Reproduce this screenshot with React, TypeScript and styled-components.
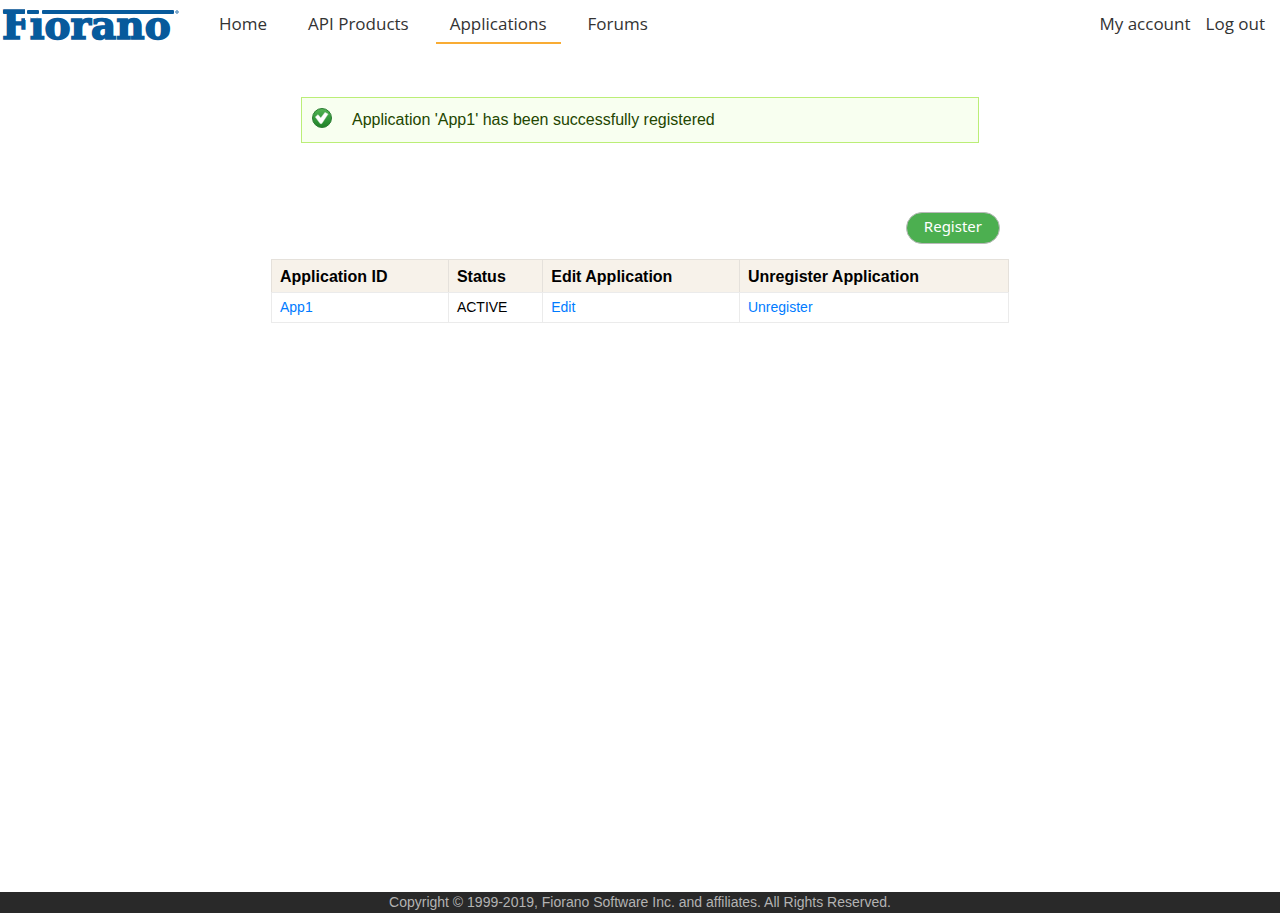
import React from "react";
import styled, { createGlobalStyle } from "styled-components";

const GlobalStyle = createGlobalStyle`
  * { box-sizing: border-box; }
  body {
    margin: 0;
    background: #fff;
    color: #000;
    font-family: "Liberation Sans", Arial, sans-serif;
  }
`;

const Page = styled.div`
  display: flex;
  flex-direction: column;
  min-height: 100vh;
`;

const Header = styled.header`
  display: flex;
  align-items: flex-start;
  padding-right: 15px;
  font-family: "Open Sans", sans-serif;
  font-size: 17px;
  line-height: 24px;
`;

const LogoLink = styled.a`
  display: block;
  flex: none;
  width: 205px;
  height: 48px;
`;

const Nav = styled.nav`
  display: flex;
  gap: 13px;
`;

const NavLink = styled.a<{ $active?: boolean }>`
  padding: 12px 14px 6px;
  border-bottom: 2px solid ${(p) => (p.$active ? "#f9ac34" : "transparent")};
  color: #333;
  text-decoration: none;
  white-space: nowrap;
`;

const Account = styled.div`
  display: flex;
  gap: 15px;
  margin-left: auto;
  padding-top: 12px;
`;

const AccountLink = styled.a`
  color: #333;
  text-decoration: none;
  white-space: nowrap;
`;

const Main = styled.main`
  display: flex;
  flex-direction: column;
  flex: 1;
  width: 100%;
  max-width: 738px;
  margin: 0 auto;
  padding-top: 49px;
`;

const Message = styled.div`
  display: flex;
  gap: 20px;
  margin: 0 30px;
  padding: 10px;
  border: 1px solid #be7;
  background: #f8fff0;
  color: #234600;
  font-size: 16px;
  line-height: 24px;
`;

const StatusIcon = styled.svg`
  flex: none;
  width: 20px;
  height: 20px;
`;

const RegisterButton = styled.button`
  align-self: flex-end;
  margin: 69px 9px 15px 0;
  padding: 0 17px 4px;
  height: 32px;
  border: 1px solid #b9b9b9;
  border-radius: 16px;
  background: #4caf50;
  color: #fff;
  font-family: "Noto Sans", sans-serif;
  font-size: 15px;
  line-height: 24px;
`;

const Table = styled.table`
  width: 100%;
  table-layout: fixed;
  border-collapse: collapse;
  text-align: left;
`;

const Column = styled.col<{ $share: number }>`
  width: ${(p) => p.$share}%;
`;

const HeadCell = styled.th`
  padding: 5px 8px 3px;
  border: 1px solid #e5e1db;
  border-bottom-color: #ebebeb;
  background: #f7f2ea;
  font-size: 16px;
  line-height: 24px;
`;

const Cell = styled.td`
  padding: 4px 8px;
  border: 1px solid #ebebeb;
  font-size: 14px;
  line-height: 21px;
`;

const CellLink = styled.a`
  color: #007bff;
  text-decoration: none;
`;

const Footer = styled.footer`
  background: #292929;
  color: #b3b3b3;
  text-align: center;
  font-size: 14px;
  line-height: 21px;
`;

function Logo() {
  return (
    <svg width="182" height="48" viewBox="0 0 182 48" role="img" aria-label="Fiorano">
      <g fill="#075a9c">
        <text
          x="2"
          y="39"
          fontFamily="DejaVu Serif, serif"
          fontWeight="bold"
          fontSize="39"
          stroke="#075a9c"
          strokeWidth="1.6"
        >
          Fiorano
        </text>
        <path d="M25 8H42V17H30V20H25z" fill="#fff" />
        <rect x="3" y="10" width="22" height="4" rx="1" />
        <rect x="27" y="10" width="12" height="4" rx="1" />
        <rect x="42" y="10" width="132" height="4" rx="1" />
      </g>
      <circle cx="177" cy="12" r="1.3" fill="#a9c6df" stroke="#5b92bf" />
    </svg>
  );
}

function CheckIcon() {
  return (
    <StatusIcon viewBox="0 0 20 20" aria-hidden="true">
      <defs>
        <linearGradient id="disc" x1="0" y1="0" x2="0" y2="1">
          <stop offset="0" stopColor="#55b555" />
          <stop offset="0.5" stopColor="#359a3d" />
          <stop offset="1" stopColor="#208128" />
        </linearGradient>
      </defs>
      <circle cx="10" cy="10" r="9.5" fill="url(#disc)" stroke="#2c7b33" />
      <path d="M3.2 9 6 6.6l2.8 3.2L13 4.2l3.2 1.9-6.4 9.6H8.2z" fill="#fff" stroke="#b9d9b8" strokeWidth="0.4" />
    </StatusIcon>
  );
}

const navItems = ["Home", "API Products", "Applications", "Forums"];
const columns = [
  { title: "Application ID", share: 24 },
  { title: "Status", share: 12.8 },
  { title: "Edit Application", share: 26.7 },
  { title: "Unregister Application", share: 36.5 },
];

export default function App() {
  return (
    <Page>
      <GlobalStyle />
      <Header>
        <LogoLink href="#"><Logo /></LogoLink>
        <Nav>
          {navItems.map((item) => (
            <NavLink key={item} href="#" $active={item === "Applications"}>{item}</NavLink>
          ))}
        </Nav>
        <Account>
          <AccountLink href="#">My account</AccountLink>
          <AccountLink href="#">Log out</AccountLink>
        </Account>
      </Header>
      <Main>
        <Message role="status">
          <CheckIcon />
          <span>Application 'App1' has been successfully registered</span>
        </Message>
        <RegisterButton type="button">Register</RegisterButton>
        <Table>
          <colgroup>
            {columns.map((c) => <Column key={c.title} $share={c.share} />)}
          </colgroup>
          <thead>
            <tr>{columns.map((c) => <HeadCell key={c.title} scope="col">{c.title}</HeadCell>)}</tr>
          </thead>
          <tbody>
            <tr>
              <Cell><CellLink href="#">App1</CellLink></Cell>
              <Cell>ACTIVE</Cell>
              <Cell><CellLink href="#">Edit</CellLink></Cell>
              <Cell><CellLink href="#">Unregister</CellLink></Cell>
            </tr>
          </tbody>
        </Table>
      </Main>
      <Footer>Copyright © 1999-2019, Fiorano Software Inc. and affiliates. All Rights Reserved.</Footer>
    </Page>
  );
}
